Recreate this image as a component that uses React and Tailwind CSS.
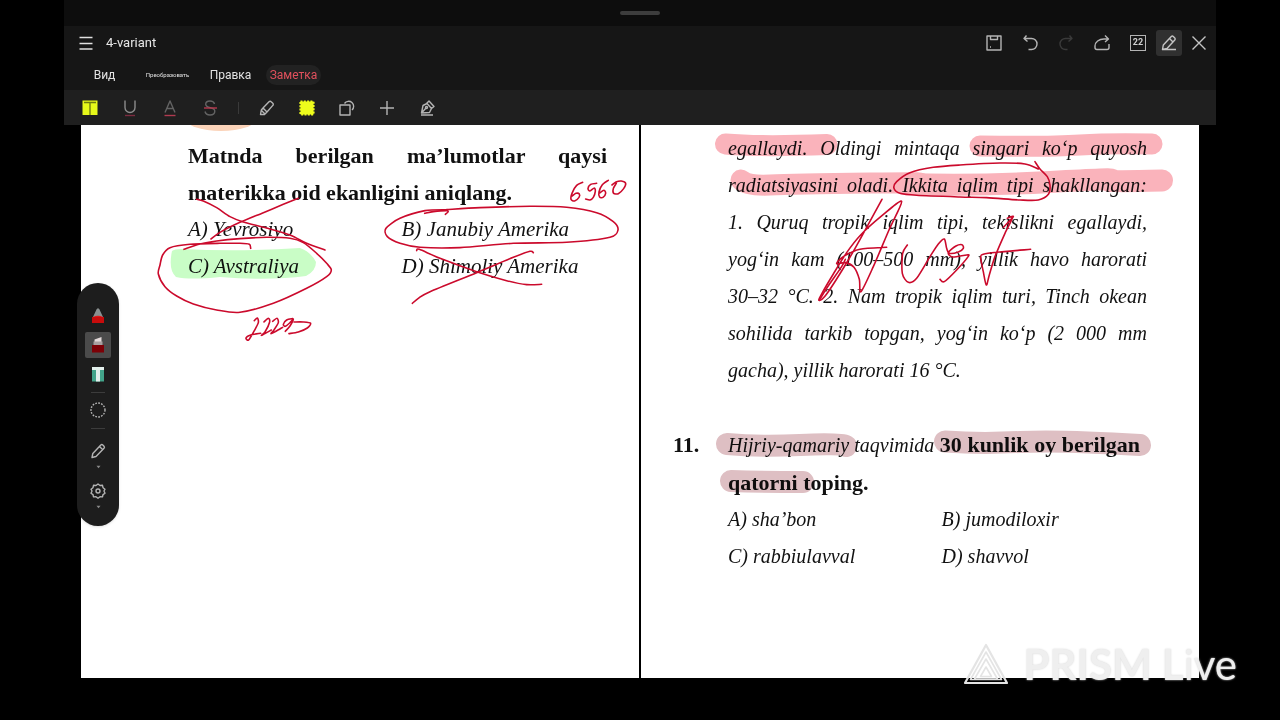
import React from "react";

/* Smooth curve through a list of x,y pairs (Catmull-Rom to Bezier). */
function curve(text) {
  const p = text.trim().split(/\s+/).map((s) => s.split(",").map(Number));
  let d = `M${p[0][0]} ${p[0][1]}`;
  for (let i = 0; i < p.length - 1; i++) {
    const a = p[Math.max(i - 1, 0)];
    const b = p[i];
    const c = p[i + 1];
    const e = p[Math.min(i + 2, p.length - 1)];
    d += `C${b[0] + (c[0] - a[0]) / 7} ${b[1] + (c[1] - a[1]) / 7} ${c[0] - (e[0] - b[0]) / 7} ${c[1] - (e[1] - b[1]) / 7} ${c[0]} ${c[1]}`;
  }
  return d;
}

const leftInk = [
  "170,238 190,243 230,263 270,290 310,306 380,324 450,345 500,370 555,390",
  "475,235 430,253 370,278 300,307 240,337 213,357",
  "332,385 328,373 300,370 240,370 150,373 90,383 68,405 60,435 55,462 75,500 110,528 160,552 230,570 300,577 400,550 500,505 560,470 574,450 560,430 530,400 490,368 450,355 380,352 300,356 230,363 180,372 132,388",
  "343,602 352,594 355,608 343,632 326,660 318,654 332,645 362,640",
  "372,606 385,595 389,606 375,636 364,646 376,640 394,630",
  "398,604 411,595 415,608 402,630 393,641 408,634 428,622",
  "458,596 440,600 430,613 436,619 450,608 460,597 450,618 436,634",
  "462,606 490,606 512,610 502,624 475,636 447,641",
];

const middleInk = [
  "134,280 160,275 200,272 204,276 196,283",
  "200,269 135,272 60,295 18,325 22,350 60,370 120,382 240,383 400,370 560,367 690,352 714,330 700,305 650,278 560,262 450,259 300,263 200,269",
  "110,392 118,388 180,415 290,455 380,482 440,494 485,493",
  "460,398 450,394 400,412 290,458 150,515 115,535 97,550",
  "608,187 590,196 577,218 573,238 584,243 597,232 598,222 588,220 577,228",
  "650,190 632,193 624,206 630,213 643,204 646,214 640,232 630,240 617,237",
  "685,181 667,194 657,216 659,231 669,232 677,220 672,211 659,219",
  "709,190 700,206 701,220 715,221 731,206 737,190 724,183 708,186 696,195",
];

const rightInk = [
  "1005,125 1020,147 1042,170 1050,195 1046,222 1015,240 960,240 860,233 780,231 650,226 600,220 582,205 590,185 630,158 700,142 780,135 900,129 975,132 1015,147",
  "546,238 500,322 445,420 380,522 357,541 366,520 400,462 440,398 482,345 545,288 605,244 567,330 520,440 483,515 478,478 462,442 437,428 410,431 430,410 480,388 560,382",
  "436,418 425,440 380,505 358,541",
  "622,375 608,400 607,460 625,487 650,475 690,410 715,372 733,357 740,385 748,400 775,396 790,385 786,374 768,378 745,398 758,411 800,405 805,409 770,450 733,485 720,478",
  "910,322 940,290 922,295 938,292 915,340 885,410 868,465 859,495 850,455 842,412 850,403 890,397 992,388",
];

const Strokes = ({ list, at }) => (
  <g transform={`translate(${at}) scale(0.3333)`} fill="none" stroke="#cb0a2c" strokeWidth="4.8" strokeLinecap="round" strokeLinejoin="round">
    {list.map((s) => (
      <path key={s} d={curve(s)} />
    ))}
  </g>
);

function Highlights() {
  return (
    <svg aria-hidden="true" viewBox="81 125 1118 553" className="pointer-events-none absolute inset-0 h-full w-full mix-blend-multiply">
      <ellipse cx="221" cy="118" rx="36" ry="13" fill="#fbd3b9" />
      <path d="M172 251Q174 249 182 249Q240 252 300 248Q311 252 316 262Q316 271 306 276Q270 281 220 277Q190 280 176 277Q168 270 172 251Z" fill="#c9fdc6" />
      <g fill="none" stroke="#fab3bb" strokeWidth="21" strokeLinecap="round">
        <path d="M725.5 144Q760 147 827 144.500" />
        <path d="M980 146Q1050 147 1080 145T1152 144" />
        <path d="M741 180Q748 186 770 185T870 183T904 184" />
        <path d="M904 184Q980 186 1050 182T1110 180T1162 180.500" strokeWidth="22" />
      </g>
      <g fill="none" stroke="#debfc3" strokeWidth="22" strokeLinecap="round">
        <path d="M727 444Q760 447 800 445T846 446" />
        <path d="M945 441.500Q980 444 1020 442T1140 445" />
        <path d="M731 481Q760 482 803 482" />
      </g>
    </svg>
  );
}

function Ink() {
  return (
    <svg aria-hidden="true" viewBox="81 125 1118 553" className="pointer-events-none absolute inset-0 h-full w-full">
      <Strokes list={leftInk} at="140 120" />
      <Strokes list={middleInk} at="380 120" />
      <Strokes list={rightInk} at="700 120" />
    </svg>
  );
}

const Icon = ({ children, size = 18, sw = 1.4, className = "text-[#b4b4b4]" }) => (
  <svg aria-hidden="true" width={size} height={size} viewBox="0 0 18 18" fill="none" stroke="currentColor" strokeWidth={sw} strokeLinejoin="round" className={className}>
    {children}
  </svg>
);

const Btn = ({ label, className = "", children }) => (
  <button type="button" aria-label={label} className={`flex shrink-0 items-center justify-center ${className}`}>
    {children}
  </button>
);

function TitleBar() {
  return (
    <div className="flex h-[33px] items-center">
      <Btn label="Menu" className="ml-2 h-7 w-7">
        <Icon className="text-[#e0e0e0]" sw={1.3}>
          <path d="M2.500 3.500h13M2.500 9.500h13M2.500 15h13" />
        </Icon>
      </Btn>
      <h1 className="ml-[6px] flex-1 text-[13px] leading-4 text-[#e6e6e6]">4-variant</h1>
      <Btn label="Save" className="h-7 w-9">
        <Icon>
          <path d="M2 2h14v14H2zM5.500 2v3.500h7V2M5 13h1" />
        </Icon>
      </Btn>
      <Btn label="Undo" className="h-7 w-9">
        <Icon>
          <path d="M5.500 1.500L3 4.500l3.500 3M3 4.500h7.500a5 5 0 0 1 0 11H7.500" />
        </Icon>
      </Btn>
      <Btn label="Redo" className="h-7 w-9">
        <Icon className="text-[#3a3a3a]">
          <path d="M12.500 1.500L15 4.500l-3.500 3M15 4.500H8.500a5 5 0 0 0 0 11h2" />
        </Icon>
      </Btn>
      <Btn label="Share" className="h-7 w-9">
        <Icon>
          <path d="M12 1.500l3.500 3.500L12 8M15.500 5H11C6 5 2 8 2 12v1.500a2 2 0 0 0 2 2h10a2 2 0 0 0 2-2V10" />
        </Icon>
      </Btn>
      <Btn label="Page 22" className="h-7 w-9">
        <span className="flex h-4 w-4 items-center justify-center border border-[#b4b4b4] text-[9px] leading-none font-bold text-[#d0d0d0]">22</span>
      </Btn>
      <Btn label="Edit" className="h-[26px] w-[26px] rounded-[3px] bg-[#303030]">
        <Icon className="text-[#c4c4c4]">
          <path d="M2.500 15.500l.8-4.500 8-8.500a1.500 1.500 0 0 1 2 0l1.500 1.500a1.500 1.500 0 0 1 0 2L7 14.500zM9.500 4.500l3.500 3.500M2.500 15.500H16" />
        </Icon>
      </Btn>
      <Btn label="Close" className="h-7 w-[34px]">
        <Icon className="text-[#c4c4c4]">
          <path d="M2.500 2.500l13 13M15.500 2.500l-13 13" />
        </Icon>
      </Btn>
    </div>
  );
}

function Tabs() {
  const base = "flex w-[63px] items-center justify-center";
  return (
    <nav className="flex h-[31px] items-center pl-[9px] leading-4 text-[#e2e2e2]">
      <button type="button" className={`${base} text-[12px]`}>Вид</button>
      <button type="button" className={`${base} text-[6px]`}>Преобразовать</button>
      <button type="button" className={`${base} text-[12px]`}>Правка</button>
      <button type="button" aria-current="page" className={`${base} text-[12px] text-[#e0505c]`}>
        <span className="rounded-full bg-[#222222] px-1 py-[2px]">Заметка</span>
      </button>
    </nav>
  );
}

function Toolbar() {
  return (
    <div className="flex h-[35px] items-center bg-[#1f1f1f] pl-[6px]">
      <Btn label="Text highlight" className="h-8 w-10">
        <Icon>
          <path d="M1.500 1.500h15v14.500h-15z" fill="#e6f81a" stroke="none" />
          <path d="M3 3.500h12M9 3.500v12.500" stroke="#6f7c10" />
        </Icon>
      </Btn>
      <Btn label="Underline" className="h-8 w-10">
        <Icon className="text-[#8c8c8c]">
          <path d="M4 1.500v7a5 5 0 0 0 10 0v-7" />
          <path d="M4 16.500h10" stroke="#7c2c40" />
        </Icon>
      </Btn>
      <Btn label="Text colour" className="h-8 w-10">
        <Icon className="text-[#636363]">
          <path d="M4 13.500L9 2l5 11.500M6 9.500h6" />
          <path d="M3.500 16.500h11" stroke="#b03a50" />
        </Icon>
      </Btn>
      <Btn label="Strikethrough" className="h-8 w-10">
        <Icon className="text-[#636363]">
          <path d="M13.500 5c-.5-2-2.500-3-4.500-3-2.500 0-4.300 1.300-4.300 3.300C4.700 10 13.800 7.500 13.800 12c0 2.500-2 4-4.800 4-2.500 0-4.500-1.300-5-3.500" />
          <path d="M3 9h13" stroke="#b8384e" />
        </Icon>
      </Btn>
      <div className="flex w-[17px] justify-center">
        <div className="h-3 w-px bg-[#3a3a3a]" />
      </div>
      <Btn label="Marker" className="h-8 w-10">
        <Icon>
          <path d="M5 9l6-6.300a1.500 1.500 0 0 1 2.200 0l1.600 1.500a1.500 1.500 0 0 1 0 2.200L9 13M5 9l4 4-2.500 2.500H2.500l.8-4.500zM3.500 11.500l3.500 3.500" />
        </Icon>
      </Btn>
      <Btn label="Area highlight" className="h-8 w-10">
        <Icon>
          <rect x="2.500" y="2.500" width="13" height="13" fill="#eefc1c" stroke="#eefc1c" strokeWidth="2.200" strokeDasharray="2 1.300" />
        </Icon>
      </Btn>
      <Btn label="Shapes" className="h-8 w-10">
        <Icon>
          <path d="M2 6h10v10H2zM6.500 4.500a5 5 0 1 1 7.500 6.500" />
        </Icon>
      </Btn>
      <Btn label="Add" className="h-8 w-10">
        <Icon>
          <path d="M9 2v14M2 9h14" />
        </Icon>
      </Btn>
      <Btn label="Signature" className="h-8 w-10">
        <Icon>
          <path d="M3.500 14L5 6.500l4-2 4.500 5-2 4zM3.500 14l4.500-5M8.500 4.500l2.500-2.500 5 5.500-2.500 2M3 16h12" />
          <circle cx="8.500" cy="8.500" r="1" />
        </Icon>
      </Btn>
    </div>
  );
}

function Caret() {
  return (
    <svg aria-hidden="true" width="5" height="4" viewBox="0 0 5 4">
      <path d="M0.500 0.800h4L2.500 3.200z" fill="#8a8a8a" />
    </svg>
  );
}

function Palette() {
  return (
    <aside className="absolute top-[158px] -left-1 flex w-[42px] flex-col items-center rounded-full bg-[#1d1d1d] py-[17px] shadow">
      <Btn label="Pen" className="h-8 w-[30px]">
        <Icon>
          <path d="M3 10h12v6H3z" fill="#c80c0c" stroke="none" />
          <path d="M7.500 2.500L9 1l1.500 1.500L14 10H4z" fill="#8a9090" stroke="none" />
          <path d="M4 10q5-2.500 10 0z" fill="#e01818" stroke="none" />
        </Icon>
      </Btn>
      <Btn label="Highlighter" className="h-[26px] w-[26px] rounded-[2px] bg-[#4b4b4b]">
        <Icon>
          <path d="M5.500 3.500L12.500 1v5h-7z" fill="#e3dada" stroke="none" />
          <path d="M4.500 5.500h9V9h-9z" fill="#a8a0a0" stroke="none" />
          <path d="M3 9h12v7.500H3z" fill="#7c0006" stroke="none" />
        </Icon>
      </Btn>
      <Btn label="Eraser" className="h-8 w-[30px]">
        <Icon>
          <path d="M3 2h12v14.500H3z" fill="#43a48a" stroke="none" />
          <path d="M3 2h12v3H3zM7 5h4v11.500H7z" fill="#e3f0ec" stroke="none" />
        </Icon>
      </Btn>
      <div className="my-[2px] h-px w-[14px] bg-[#3c3c3c]" />
      <Btn label="Lasso" className="h-[30px] w-[30px]">
        <Icon>
          <circle cx="9" cy="9" r="7" strokeDasharray="1.700 1.300" />
        </Icon>
      </Btn>
      <div className="mt-[3px] mb-2 h-px w-[14px] bg-[#3c3c3c]" />
      <Btn label="Pencil" className="h-7 w-[30px]">
        <Icon>
          <path d="M3 15.500l.8-4 8-8.500a1.500 1.500 0 0 1 2 0l1.200 1.200a1.500 1.500 0 0 1 0 2L7 14.500zM10.500 4.500l3 3" />
        </Icon>
      </Btn>
      <Caret />
      <Btn label="Settings" className="mt-2 h-7 w-[30px]">
        <Icon>
          <path d="M9 2l2 1.500 2.500-.2.500 2.400 2 1.500L15 9l1 2.200-2 1.400-.5 2.300-2.500-.2L9 16.200l-2-1.500-2.500.2-.5-2.300-2-1.400L3 9 2 7.200l2-1.500.5-2.400 2.500.2z" />
          <circle cx="9" cy="9" r="2" />
        </Icon>
      </Btn>
      <Caret />
    </aside>
  );
}

const Line = ({ children }) => <span className="block whitespace-nowrap [text-align-last:justify]">{children}</span>;

function Options({ items, className = "text-[20px]" }) {
  return (
    <ul className={`grid grid-cols-2 gap-x-2 whitespace-nowrap italic ${className}`}>
      {items.map((t) => (
        <li key={t}>{t}</li>
      ))}
    </ul>
  );
}

function Watermark() {
  return (
    <div className="pointer-events-none absolute right-[43px] bottom-[35px] flex items-center gap-[14px] text-[#efefef]">
      <svg aria-hidden="true" width="46" height="42" viewBox="0 0 46 42" fill="none" stroke="#e4e4e4" strokeWidth="1.600" strokeLinejoin="round">
        <path d="M23 2L44 40H2z" strokeWidth="2.200" />
        <path d="M23 9L38.500 36.500H7.500z" />
        <path d="M23 16L34.500 36H11.500z" />
        <path d="M23 24L28.500 33.500H17.500z" />
      </svg>
      <span className="font-[Lato] text-[42px] leading-[42px] whitespace-nowrap [text-shadow:0_0_2px_#d4d4d4]">
        <b>PRISM L</b>ive
      </span>
    </div>
  );
}

export default function App() {
  return (
    <div className="relative flex min-h-screen flex-col overflow-hidden bg-black font-[Roboto,sans-serif]">
      <div className="mx-[5%] flex flex-1 flex-col">
        <header className="bg-[#161616]">
          <div className="flex h-[26px] items-center justify-center bg-[#0d0d0d]">
            <div className="h-1 w-10 rounded-full bg-[#3d3d3d]" />
          </div>
          <TitleBar />
          <Tabs />
          <Toolbar />
        </header>
        <main className="relative mx-[17px] mb-[42px] grid flex-1 grid-cols-2 bg-white font-['Liberation_Serif',serif] text-[20px] leading-[37px] text-[#111]">
          <section className="pt-3 pr-[33px] pl-[107px]">
            <h2 className="text-[22px] font-bold">
              <Line>Matnda berilgan ma’lumotlar qaysi</Line>
              <span className="block whitespace-nowrap">materikka oid ekanligini aniqlang.</span>
            </h2>
            <Options className="text-[21px]" items={["A) Yevrosiyo", "B) Janubiy Amerika", "C) Avstraliya", "D) Shimoliy Amerika"]} />
          </section>
          <section className="-ml-px border-l-2 border-black pt-[5px] pr-[52px] pl-8">
            <p className="pl-[55px] italic">
              <Line>egallaydi. Oldingi mintaqa singari ko‘p quyosh</Line>
              <Line>radiatsiyasini oladi. Ikkita iqlim tipi shakllangan:</Line>
              <Line>1. Quruq tropik iqlim tipi, tekislikni egallaydi,</Line>
              <Line>yog‘in kam (100–500 mm), yillik havo harorati</Line>
              <Line>30–32 °C. 2. Nam tropik iqlim turi, Tinch okean</Line>
              <Line>sohilida tarkib topgan, yog‘in ko‘p (2 000 mm</Line>
              <span className="block whitespace-nowrap">gacha), yillik harorati 16 °C.</span>
            </p>
            <div className="mt-[37px] flex">
              <b className="w-[55px] shrink-0 text-[22px]">11.</b>
              <div className="flex-1">
                <h2 className="pr-[7px] text-[22px] font-bold">
                  <Line>
                    <i className="text-[20px] font-normal">Hijriy-qamariy taqvimida</i> 30 kunlik oy berilgan
                  </Line>
                  <span className="block whitespace-nowrap">qatorni toping.</span>
                </h2>
                <Options items={["A) sha’bon", "B) jumodiloxir", "C) rabbiulavval", "D) shavvol"]} />
              </div>
            </div>
          </section>
          <Highlights />
          <Ink />
          <Palette />
        </main>
      </div>
      <Watermark />
    </div>
  );
}
